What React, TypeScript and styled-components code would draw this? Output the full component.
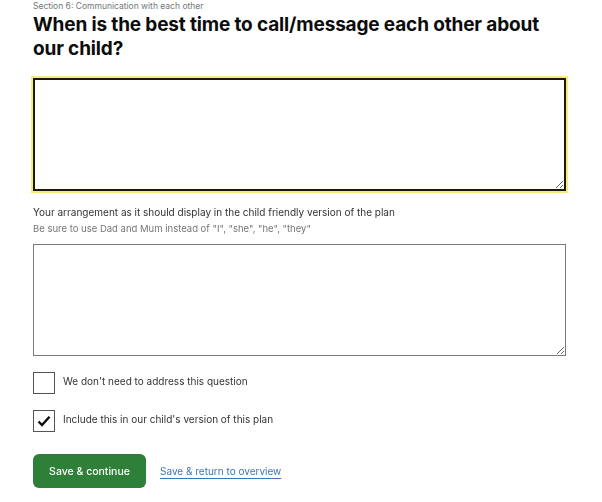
import styled, { createGlobalStyle } from 'styled-components';

const GlobalStyle = createGlobalStyle`
  body {
    margin: 0;
    background: #ffffff;
    font-family: 'Inter', 'Liberation Sans', sans-serif;
    color: #0b0c0c;
  }
`;

export default function App() {
  return (
    <>
      <GlobalStyle />
      <Page>
        <Caption>Section 6: Communication with each other</Caption>
        <Heading>When is the best time to call/message each other about our child?</Heading>

        <TextArea focused autoFocus />

        <Label>Your arrangement as it should display in the child friendly version of the plan</Label>
        <Hint>Be sure to use Dad and Mum instead of "I", "she", "he", "they"</Hint>
        <TextArea />

        <Options>
          <Option>
            <Box />
            <OptionText>We don't need to address this question</OptionText>
          </Option>
          <Option>
            <Box>
              <svg width="14" height="12" viewBox="0 0 14 12">
                <path d="M1.5 6.5 L5 10 L12.5 1.8" fill="none" stroke="#0b0c0c" strokeWidth="2.4" />
              </svg>
            </Box>
            <OptionText>Include this in our child's version of this plan</OptionText>
          </Option>
        </Options>

        <Actions>
          <Button>Save &amp; continue</Button>
          <Link href="#">Save &amp; return to overview</Link>
        </Actions>
      </Page>
    </>
  );
}

const Page = styled.div`
  width: 533px;
  padding: 0 0 0 33px;
  display: flex;
  flex-direction: column;
`;

const Caption = styled.div`
  font-size: 8.5px;
  color: #6f777b;
  line-height: 11px;
  margin-top: 1px;
`;

const Heading = styled.h1`
  margin: 1px 0 0;
  font-size: 19px;
  line-height: 24px;
  font-weight: 700;
  letter-spacing: -0.15px;
  color: #0b0c0c;
`;

const TextArea = styled.textarea<{ focused?: boolean }>`
  box-sizing: border-box;
  width: 533px;
  height: ${p => (p.focused ? '113px' : '112px')};
  margin: ${p => (p.focused ? '17px 0 0' : '9px 0 0')};
  border: ${p => (p.focused ? '2px solid #1a1a0a' : '1px solid #7a7a7a')};
  outline: ${p => (p.focused ? '2px solid #f7ec7a' : 'none')};
  outline-offset: 0;
  border-radius: 0;
  padding: 4px;
  font-family: inherit;
  font-size: 12px;
  resize: vertical;
  background: #fff;
  caret-color: #0b0c0c;
`;

const Label = styled.div`
  margin-top: 14px;
  font-size: 10px;
  line-height: 14px;
  color: #333;
`;

const Hint = styled.div`
  margin-top: 3px;
  font-size: 9.5px;
  line-height: 13px;
  color: #777;
`;

const Options = styled.div`
  display: flex;
  flex-direction: column;
  gap: 16px;
  margin-top: 16px;
`;

const Option = styled.label`
  display: flex;
  align-items: center;
  gap: 8px;
`;

const Box = styled.span`
  box-sizing: border-box;
  width: 22px;
  height: 22px;
  border: 1px solid #555;
  display: flex;
  align-items: center;
  justify-content: center;
  background: #fff;
`;

const OptionText = styled.span`
  font-size: 10px;
  color: #333;
  margin-top: -5px;
`;

const Actions = styled.div`
  display: flex;
  align-items: center;
  gap: 14px;
  margin-top: 22px;
`;

const Button = styled.button`
  width: 113px;
  height: 34px;
  border: none;
  border-radius: 6px;
  background: #2e7f38;
  color: #fff;
  font-family: inherit;
  font-size: 10.5px;
  font-weight: 500;
  cursor: pointer;
`;

const Link = styled.a`
  font-size: 10px;
  color: #3f75b8;
  text-decoration: underline;
  text-underline-offset: 3px;
  text-decoration-color: #3f75b8;
`;
